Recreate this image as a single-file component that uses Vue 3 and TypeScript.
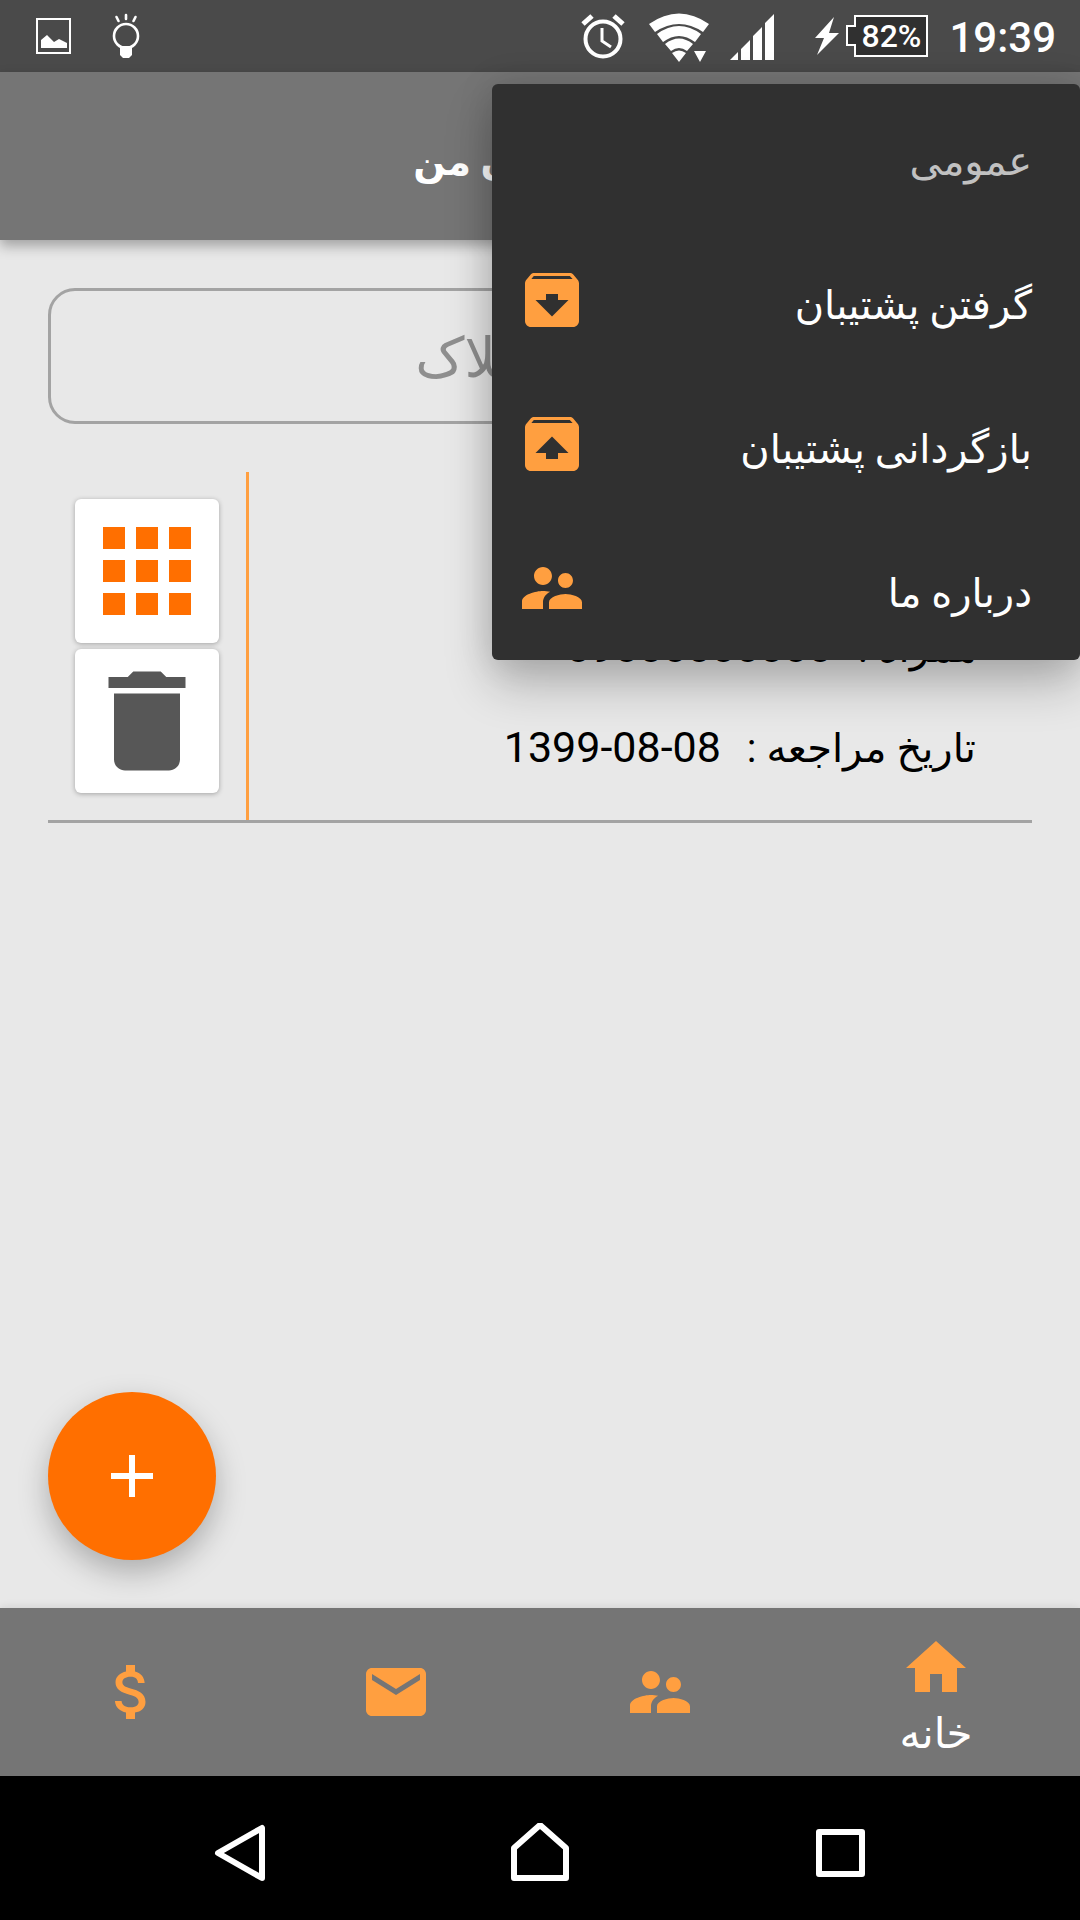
<script setup lang="ts">
import { ref } from 'vue'

interface MenuEntry {
  label: string
  icon: string
}

const archiveBox =
  'M20.54 5.23l-1.39-1.68C18.88 3.21 18.47 3 18 3H6c-.47 0-.88.21-1.16.55L3.46 5.23C3.17 5.57 3 6.02 3 6.5V19c0 1.1.9 2 2 2h14c1.1 0 2-.9 2-2V6.5c0-.48-.17-.93-.46-1.27z'
const people =
  'M16.5 12c1.38 0 2.49-1.12 2.49-2.5S17.88 7 16.5 7C15.12 7 14 8.12 14 9.5s1.12 2.5 2.5 2.5zM9 11c1.66 0 2.99-1.34 2.99-3S10.66 5 9 5C7.34 5 6 6.34 6 8s1.34 3 3 3zm7.5 3c-1.83 0-5.5.92-5.5 2.75V19h11v-2.25c0-1.83-3.67-2.75-5.5-2.75zM9 13c-2.33 0-7 1.17-7 3.5V19h7v-2.25c0-.85.33-2.34 2.37-3.47C10.5 13.1 9.66 13 9 13z'

const entries: MenuEntry[] = [
  { label: 'گرفتن پشتیبان', icon: archiveBox + 'M12 17.5L6.5 12H10v-2h4v2h3.5L12 17.5zM5.12 5l.81-1h12l.94 1H5.12z' },
  { label: 'بازگردانی پشتیبان', icon: archiveBox + 'M12 9.5l5.5 5.5H14v2h-4v-2H6.5L12 9.5zM5.12 5l.82-1h12l.93 1H5.12z' },
  { label: 'درباره ما', icon: people },
]

const tabs: MenuEntry[] = [
  { label: 'خانه', icon: 'M10 20v-6h4v6h5v-8h3L12 3 2 12h3v8z' },
  { label: 'مشتریان', icon: people },
  { label: 'پیام‌ها', icon: 'M20 4H4c-1.1 0-1.99.9-1.99 2L2 18c0 1.1.9 2 2 2h16c1.1 0 2-.9 2-2V6c0-1.1-.9-2-2-2zm0 4l-8 5-8-5V6l8 5 8-5v2z' },
  { label: 'مالی', icon: 'M11.8 10.9c-2.27-.59-3-1.2-3-2.15 0-1.09 1.01-1.85 2.7-1.85 1.78 0 2.44.85 2.5 2.1h2.21c-.07-1.72-1.12-3.3-3.21-3.81V3h-3v2.16c-1.94.42-3.5 1.68-3.5 3.61 0 2.31 1.91 3.46 4.7 4.13 2.5.6 3 1.48 3 2.41 0 .69-.49 1.79-2.7 1.79-2.06 0-2.87-.92-2.98-2.1h-2.2c.12 2.19 1.76 3.42 3.68 3.83V21h3v-2.15c1.95-.37 3.5-1.5 3.5-3.55 0-2.84-2.43-3.81-4.7-4.4z' },
]

const activeTab = ref(0)
const query = ref('')
</script>

<template>
  <div class="screen" dir="rtl" lang="fa">
    <div class="status" dir="ltr">
      <svg width="36" height="36" viewBox="0 0 36 36">
        <path d="M1 1h33v34H1z" fill="none" stroke="#fff" stroke-width="2" />
        <path d="M5 30V22l6-5 7 7 5-3 8 4v5z" fill="#fff" />
      </svg>
      <svg class="s-bulb" width="28" height="46" viewBox="0 0 28 46">
        <circle cx="14" cy="23" r="12" fill="none" stroke="#fff" stroke-width="2.600" />
        <path d="M8 33h12v9l-3 3h-6l-3-3z" fill="#fff" />
        <path d="M14 2v4M4.500 4l2 4M23.500 4l-2 4" stroke="#fff" stroke-width="2.600" stroke-linecap="round" />
      </svg>
      <span class="grow"></span>
      <svg class="s-alarm" width="44" height="46" viewBox="0 0 44 46">
        <g fill="none" stroke="#fff">
          <circle cx="22" cy="26" r="17.500" stroke-width="4" />
          <path d="M21 15v13l9 6" stroke-width="3" />
          <path d="M2 11l9-8M42 11l-9-8" stroke-width="5" />
        </g>
      </svg>
      <svg class="s-wifi" width="60" height="50" viewBox="0 0 60 50">
        <g fill="#fff">
          <path d="M0 11Q30-10 60 11L54 19Q30 3 6 19z" />
          <path d="M8 21Q30 5 52 21L46 29Q30 17 14 29z" />
          <path d="M16 31Q30 20 44 31L38 38Q30 32 22 38z" />
          <path d="M23 40Q30 35 37 40L30 49zM45 38h12l-6 11z" />
        </g>
      </svg>
      <svg class="s-signal" width="46" height="46" viewBox="0 0 46 46">
        <path d="M1 46l8-8v8zM12 35l9-9v20h-9zM24 22l9-9v33h-9zM36 9l9-9v46h-9z" fill="#fff" />
      </svg>
      <svg class="s-bolt" width="24" height="38" viewBox="0 0 24 38">
        <path d="M19 0L0 21h9L2 38 24 16H14z" fill="#fff" />
      </svg>
      <div class="battery">
        <svg width="84" height="44" viewBox="0 0 84 44">
          <path d="M10 2h72v40H10V31H2V12h8z" fill="#303030" stroke="#fff" stroke-width="2" />
        </svg>
        <span class="level">82%</span>
      </div>
      <time class="clock">19:39</time>
    </div>

    <header class="appbar"><h1>مشتریان من</h1></header>

    <main class="content">
      <input v-model="query" class="search" type="search" placeholder="جستجو پلاک" aria-label="جستجو پلاک" />

      <article class="record">
        <div class="fields">
          <p>نام : <bdi>علی</bdi></p>
          <p>همراه : <bdi>09000000000</bdi></p>
          <p>تاریخ مراجعه : <bdi>1399-08-08</bdi></p>
        </div>
        <div class="actions">
          <button type="button" aria-label="جزئیات">
            <svg width="132" height="132" viewBox="0 0 24 24" fill="#ff6f00">
              <path d="M4 8h4V4H4v4zm6 12h4v-4h-4v4zm-6 0h4v-4H4v4zm0-6h4v-4H4v4zm6 0h4v-4h-4v4zm6-10v4h4V4h-4zm-6 4h4V4h-4v4zm6 6h4v-4h-4v4zm0 6h4v-4h-4v4z" />
            </svg>
          </button>
          <button type="button" aria-label="حذف">
            <svg width="132" height="132" viewBox="0 0 24 24" fill="#575757">
              <path d="M6 19c0 1.100.9 2 2 2h8c1.100 0 2-.9 2-2V7H6v12zM19 4h-3.500l-1-1h-5l-1 1H5v2h14V4z" />
            </svg>
          </button>
        </div>
      </article>

      <button class="fab" type="button" aria-label="افزودن">
        <svg width="72" height="72" viewBox="0 0 24 24" fill="#fff"><path d="M19 13h-6v6h-2v-6H5v-2h6V5h2v6h6v2z" /></svg>
      </button>
    </main>

    <nav class="tabs">
      <button
        v-for="(tab, i) in tabs"
        :key="tab.label"
        type="button"
        :class="{ active: i === activeTab }"
        :aria-label="tab.label"
        @click="activeTab = i"
      >
        <svg width="72" height="72" viewBox="0 0 24 24"><path :d="tab.icon" /></svg>
        <span v-if="i === activeTab">{{ tab.label }}</span>
      </button>
    </nav>

    <div class="system" dir="ltr">
      <button type="button" aria-label="Back">
        <svg width="60" height="60" viewBox="0 0 60 60"><path d="M52 5v50L8 30z" /></svg>
      </button>
      <button type="button" aria-label="Home">
        <svg width="60" height="60" viewBox="0 0 60 60"><path d="M4 25L30 2l26 23v30H4z" /></svg>
      </button>
      <button type="button" aria-label="Recent apps">
        <svg width="60" height="60" viewBox="0 0 60 60"><path d="M9 9h43v42H9z" /></svg>
      </button>
    </div>

    <div class="menu" role="menu">
      <div class="menu-title"><span>عمومی</span></div>
      <button v-for="entry in entries" :key="entry.label" type="button" role="menuitem">
        <span>{{ entry.label }}</span>
        <svg width="72" height="72" viewBox="0 0 24 24"><path :d="entry.icon" fill-rule="evenodd" /></svg>
      </button>
    </div>
  </div>
</template>

<style>
body {
  margin: 0;
}
</style>

<style scoped>
.screen {
  position: relative;
  display: flex;
  flex-direction: column;
  min-height: 100vh;
  overflow: hidden;
  background: #e8e8e8;
  font-family: Roboto, 'Noto Sans', 'DejaVu Sans', sans-serif;
  font-size: 40px;
  line-height: 60px;
  color: #000;
}
button {
  display: flex;
  align-items: center;
  padding: 0;
  border: 0;
  background: none;
  font: inherit;
  color: inherit;
}
svg {
  display: block;
  flex: none;
}

.status {
  display: flex;
  align-items: center;
  height: 72px;
  padding: 0 24px 0 36px;
  background: #4a4a4a;
  color: #fff;
}
.grow {
  flex: 1;
}
.s-bulb {
  margin-left: 40px;
}
.s-wifi {
  margin: 4px 20px 0 24px;
}
.s-signal {
  margin-top: 2px;
}
.s-bolt {
  margin-left: 40px;
}
.battery {
  position: relative;
  margin: 0 20px 0 6px;
}
.level {
  position: absolute;
  inset: 0 0 0 8px;
  font-size: 32px;
  font-weight: 500;
  line-height: 44px;
  text-align: center;
}
.clock {
  padding-top: 4px;
  font-size: 42px;
  font-weight: 500;
}

.appbar {
  z-index: 1;
  display: flex;
  align-items: center;
  justify-content: center;
  box-sizing: border-box;
  height: 168px;
  padding: 12px 24px 0 0;
  background: #757575;
  color: #fff;
  box-shadow: 0 6px 12px rgba(0, 0, 0, 0.3);
}
h1 {
  margin: 0;
  font-size: 38px;
  font-weight: 700;
}

.content {
  position: relative;
  flex: 1;
  padding: 48px;
}
.search {
  display: block;
  box-sizing: border-box;
  width: 100%;
  height: 136px;
  padding: 4px 24px 0;
  border: 3px solid #a3a3a3;
  border-radius: 27px;
  appearance: none;
  background: none;
  font: inherit;
  font-size: 55px;
  text-align: center;
}
.search::placeholder {
  color: #8f8f8f;
  opacity: 1;
}

.record {
  display: flex;
  margin-top: 48px;
  border-bottom: 3px solid #a3a3a3;
}
.fields {
  flex: 1;
  display: flex;
  flex-direction: column;
  justify-content: center;
  gap: 40px;
  padding: 2px 56px 0 0;
}
.fields p {
  height: 60px;
  margin: 0;
}
.fields bdi {
  margin-right: 16px;
  font-size: 43px;
}
.actions {
  display: flex;
  flex-direction: column;
  gap: 6px;
  padding: 27px;
  border-right: 3px solid #ff9f40;
}
.actions button {
  justify-content: center;
  width: 144px;
  height: 144px;
  border-radius: 6px;
  background: #fff;
  box-shadow: 0 1px 5px rgba(0, 0, 0, 0.3);
}

.fab {
  position: absolute;
  bottom: 48px;
  left: 48px;
  justify-content: center;
  width: 168px;
  height: 168px;
  border-radius: 50%;
  background: #ff6f00;
  box-shadow: 0 12px 30px rgba(0, 0, 0, 0.26);
}

.tabs {
  z-index: 1;
  display: flex;
  height: 168px;
  background: #757575;
  color: #fff;
  font-size: 42px;
  box-shadow: 0 0 9px rgba(0, 0, 0, 0.12);
}
.tabs button {
  flex: 11;
  flex-direction: column;
  justify-content: center;
}
.tabs .active {
  flex: 12;
  padding-top: 12px;
}
.tabs svg,
.menu svg {
  fill: #ff9f40;
}

.system {
  z-index: 1;
  display: flex;
  justify-content: center;
  box-sizing: border-box;
  height: 144px;
  padding: 10px 90px 0;
  background: #000;
}
.system button {
  flex: 1;
  justify-content: center;
}
.system path {
  fill: none;
  stroke: #fff;
  stroke-width: 6;
  stroke-linejoin: round;
}

.menu {
  position: absolute;
  z-index: 2;
  top: 84px;
  right: 0;
  width: 588px;
  border-radius: 6px;
  background: #303030;
  color: #fff;
  box-shadow: 0 24px 48px rgba(0, 0, 0, 0.24), 0 0 36px rgba(0, 0, 0, 0.12);
}
.menu-title,
.menu button {
  display: flex;
  align-items: center;
  justify-content: space-between;
  box-sizing: border-box;
  width: 100%;
  height: 144px;
  padding: 0 48px 0 24px;
}
.menu span {
  padding-top: 12px;
}
.menu-title {
  color: #c1c1c1;
}
</style>
